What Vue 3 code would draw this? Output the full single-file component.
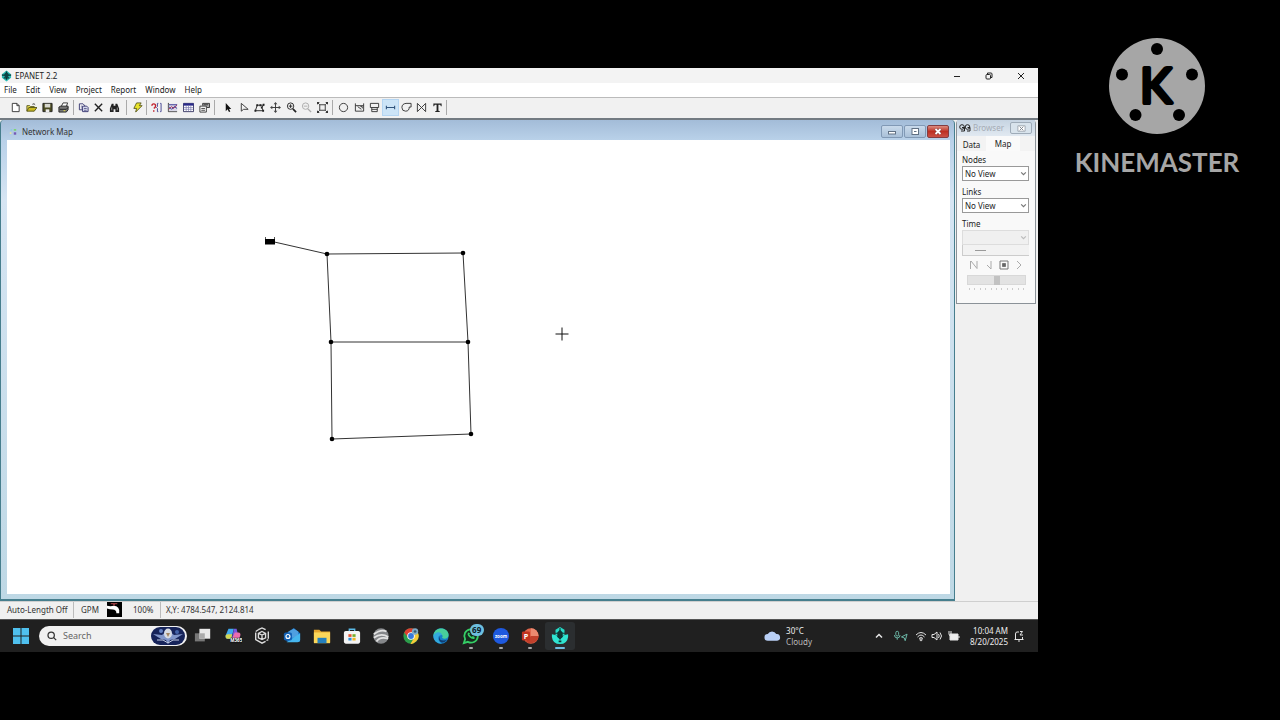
<script setup>
import { ref } from 'vue'

const menus = ['File', 'Edit', 'View', 'Project', 'Report', 'Window', 'Help']

const k = 'fill="none" stroke="#333" stroke-width="1"'
const groups = [
  { id: 'file', tools: [
    { name: 'New', art: `<path d="M2.500 1.500h5l2.500 2.500v6.500h-7.500z" fill="#fff" stroke="#333"/><path d="M7.500 1.500v2.500h2.500" ${k}/>` },
    { name: 'Open', art: '<path d="M1 10V4h3l1 1h4v2" fill="#f2e65c" stroke="#55551a"/><path d="M1 10l2-4h9l-3 4z" fill="#c9b922" stroke="#55551a"/><path d="M7 2.500q2-1.500 3 .5" fill="none" stroke="#333"/>' },
    { name: 'Save', art: '<path d="M1 1.500h10v9H1z" fill="#4c4c22" stroke="#222"/><path d="M3 2h6v4H3z" fill="#d8d8cf"/><path d="M4 8h4v3H4z" fill="#eee"/>' },
    { name: 'Print', art: '<path d="M3.500 5l2-4h5l-1.500 4" fill="#fff" stroke="#333"/><path d="M1 5.500l2-1h8v4L9 11H1z" fill="#777" stroke="#222"/><path d="M2 8h7l2-2" fill="none" stroke="#222"/><path d="M6 9.500h2" stroke="#eee23c"/>' } ] },
  { id: 'edit', tools: [
    { name: 'Copy', art: '<path d="M1.500 2h4l1.500 1.500v5h-5.500z" fill="#fff" stroke="#33336e"/><path d="M5 4.500h4.500l1.500 1.500v4.500H5z" fill="#dfe2f4" stroke="#33336e"/><path d="M6.500 7h3M6.500 9h3M3 4.500h1.500M3 6.500h1.500" stroke="#33336e" stroke-width=".8"/>' },
    { name: 'Delete', art: '<path d="M2 2l8 8M10 2l-8 8" fill="none" stroke="#222" stroke-width="1.500"/>' },
    { name: 'Find', art: '<path d="M3 2h2v2h2V2h2l2 5v4H7V8H5v3H1V7z" fill="#222"/><path d="M3 6v3M9 6v3" stroke="#bbb" stroke-width=".8"/>' } ] },
  { id: 'run', tools: [
    { name: 'Run', art: '<path d="M5 1h5L8 4h3L4 11l1-4H2z" fill="#e9e42c" stroke="#4b4b12" stroke-width=".9"/>' } ] },
  { id: 'report', tools: [
    { name: 'Query', art: '<path d="M1 4q0-2 2-2t2 2-2 3M3 9v1.500" fill="none" stroke="#c11f2a" stroke-width="1.500"/><path d="M8 1.500H7V5L6 6l1 1v3.500h1M10 1.500h1v9h-1" fill="none" stroke="#40408f"/>' },
    { name: 'Graph', art: '<path d="M1.500 1v9.500H11" fill="none" stroke="#333"/><path d="M2 2h9v8H2z" fill="#d8d8e8"/><path d="M2 8l3-3 2 2 4-4" fill="none" stroke="#b02040"/><path d="M2 5l3 3 3-3 3 2M2 3h9" fill="none" stroke="#333391"/>' },
    { name: 'Table', art: '<path d="M.500 1.500h11v9H.500z" fill="#fff" stroke="#333360"/><path d="M.500 1.500h11v2.500H.500z" fill="#29298a"/><path d="M3.500 4v6M6 4v6M8.500 4v6M1 6h10M1 8h10" stroke="#7575ac" stroke-width=".7"/>' },
    { name: 'Options', art: '<path d="M4 4V1.500h7.500V6H8.500" fill="#aaa" stroke="#333"/><path d="M1 4.500h7v6.500H1z" fill="#fff" stroke="#333"/><path d="M5 3h5M2.500 7h4M2.500 9h4" stroke="#333"/>' } ] },
  { id: 'map', tools: [
    { name: 'Select Object', art: '<path d="M3 1v9l2-2 1.500 3 1.500-.700L6.600 7.500H9z" fill="#111"/>' },
    { name: 'Select Vertex', art: `<path d="M2.500 1.500v8.500l2.500-2h5z" ${k}/>` },
    { name: 'Select Region', art: '<path d="M3.500 3.500h7L8.500 6l1.500 3.500H1.500z" fill="none" stroke="#222"/><path d="M2.500 2.500h2v2h-2zM9.500 2h2v2h-2zM7.500 5h2v2h-2zM9 8.500h2v2H9zM.500 8.500h2v2h-2zM6 2.500h2v2H6z" fill="#222"/>' },
    { name: 'Pan', art: '<path d="M6 1.500v9M1.500 6h9" stroke="#333"/><path d="M6 0l2 2.500H4zM6 12l2-2.500H4zM0 6l2.500-2v4zM12 6L9.500 4v4z" fill="#444"/>' },
    { name: 'Zoom In', art: `<circle cx="5" cy="4.500" r="3.500" fill="none" stroke="#222"/><path d="M3 4.500h4M5 2.500v4" stroke="#222"/><path d="M7.500 7.500l3.500 3.500" stroke="#222" stroke-width="1.800"/>` },
    { name: 'Zoom Out', art: '<circle cx="5" cy="4.500" r="3.500" fill="none" stroke="#aaa"/><path d="M3 4.500h4" stroke="#aaa"/><path d="M7.500 7.500l3.500 3.500" stroke="#aaa" stroke-width="1.500"/>' },
    { name: 'Full Extent', art: `<path d="M3 3h6v6H3z" fill="none" stroke="#333"/><path d="M.500 .500L3 3M11.500 .500L9 3M.500 11.500L3 9M11.500 11.500L9 9" ${k}/><path d="M0 0h3L0 3zM12 0v3L9 0zM0 12V9l3 3zM12 12H9l3-3z" fill="#333"/>` } ] },
  { id: 'draw', tools: [
    { name: 'Junction', art: `<circle cx="6" cy="6" r="4.500" ${k}/>` },
    { name: 'Reservoir', art: `<path d="M1.500 1.500v8.500h9V1.500M1.500 4h9" ${k}/><path d="M4 5l4 3M7 5h2v2" ${k}/>` },
    { name: 'Tank', art: `<path d="M1.500 1.500h9V6h-9zM3 6v4.500h6V6M3 8h6" ${k}/>` },
    { name: 'Pipe', on: true, art: '<path d="M1.500 4v4M10.500 4v4M2 6h8" fill="none" stroke="#31547d" stroke-width="1.200"/>' },
    { name: 'Pump', art: `<path d="M11 1.500H5.500Q1 2 1 6t4 4 4-4.500h2z" ${k}/>` },
    { name: 'Valve', art: `<path d="M1.500 1.500v9l9-9v9z" ${k}/>` },
    { name: 'Label', art: '<path d="M1.500 1.500h9v3H9.700L9 3H7v6.500l1.500.500v1h-5v-1l1.500-.500V3H3l-.700 1.500h-.800z" fill="#222"/>' } ] },
]

const nodes = [
  { x: 320, y: 114 }, { x: 456, y: 113 }, { x: 324, y: 202 },
  { x: 461, y: 202 }, { x: 325, y: 299 }, { x: 464, y: 294 },
]
const pipes = [[0, 1], [0, 2], [1, 3], [2, 3], [2, 4], [3, 5], [4, 5]]
const reservoir = { x: 263, y: 101 }

const nodeView = ref('No View')
const linkView = ref('No View')

const apps = [
  { name: 'Task View', art: '<path d="M1 7h11v9H1z" fill="#777"/><path d="M6 2h12v11H6z" fill="#e8e8e8"/><path d="M6 7h6v6H6z" fill="#aaa"/>' },
  { name: 'Microsoft 365 Copilot', art: '<path d="M5 2h6L8 13H4Q1 13 2 9z" fill="#3fa9ee"/><path d="M4 8h5L8 13H4Q1 13 2 9z" fill="#d4d653"/><path d="M11 2h3l1 4-3 7-3-1z" fill="#7657e0"/><path d="M12 6h4q3 0 2 4l-2 5H8z" fill="#eb6cae"/><path d="M7 12h13v6H7z" fill="#181818"/><text x="7" y="17" font-size="5" font-weight="700" fill="#fff">M365</text>' },
  { name: 'Copilot Studio', art: '<path d="M6 3l4-2 4 2M17 5v8M14 16l-4 2-7-4V6M6 3L3 5M17 14l-2 1" fill="none" stroke="#ddd" stroke-width="1.500"/><path d="M10 5l4 2v5l-4 2-4-2V7zM6 7l4 2 4-2M10 9v5" fill="none" stroke="#ddd" stroke-width="1.500"/>' },
  { name: 'Outlook', art: '<path d="M4 7l8-6 7 6v9H4z" fill="#1673c5"/><path d="M6 5l6-3 5 3v7H6z" fill="#4f9fe0"/><path d="M4 17L19 7v7q0 3-3 3z" fill="#46b6ee"/><rect x="1" y="6" width="9" height="9" rx="2" fill="#1261b5"/><circle cx="5.500" cy="10.500" r="2.200" fill="none" stroke="#fff" stroke-width="1.300"/>' },
  { name: 'File Explorer', art: '<path d="M1 3h6l2 2h10v12H1z" fill="#e4a62e"/><path d="M1 6h18v12H1z" fill="#fbd75a"/><path d="M5 12h10v6H5z" fill="#2580bd"/>' },
  { name: 'Microsoft Store', art: '<path d="M7 5V2.500h6V5" fill="none" stroke="#5bbbe8" stroke-width="1.500"/><rect x="1" y="4.500" width="18" height="14" rx="2" fill="#f4f4f4"/><path d="M6 8h3.500v3H6z" fill="#e7532f"/><path d="M10.500 8H14v3h-3.500z" fill="#75af2b"/><path d="M6 12h3.500v3H6z" fill="#2b91dc"/><path d="M10.500 12H14v3h-3.500z" fill="#f2b526"/>' },
  { name: 'Earth', art: '<circle cx="10" cy="10" r="8.500" fill="#85878a"/><path d="M2 8q8-6 14-3M2 12q8-6 16-1M5 16q4-6 13-3" fill="none" stroke="#e2e2e2" stroke-width="2"/>' },
  { name: 'Chrome', art: '<circle cx="10" cy="10" r="8.500" fill="#2c9d4b"/><path d="M2.500 6a8.500 8.500 0 0 1 15 0h-7.500L7 12z" fill="#df3e32"/><path d="M10 6h7.500q3 6-2 10t-6 2.500l4-6.500z" fill="#f7ca38"/><circle cx="10" cy="10" r="4.200" fill="#fff"/><circle cx="10" cy="10" r="3.200" fill="#3679dc"/><circle cx="14.500" cy="5" r="3.500" fill="#7daac7"/><circle cx="14.500" cy="5" r="1.500" fill="#315977"/>' },
  { name: 'Edge', art: '<circle cx="10" cy="10" r="8.500" fill="#1680cb"/><path d="M1.500 10C2-1 18-1 18.500 9c0 4-5 5-7.500 3 3-3-3-7-9.500-2z" fill="#48cf9b"/><path d="M1.500 10c2-6 9.500-5 9.500-1-6 0-5 7 0 9.500-5 0-9.500-3-9.500-8.500z" fill="#33a9dc"/><path d="M9 10q-2 5 4 5 2 0 4-1-3 4-7 3-4-3-1-7z" fill="#113c70"/>' },
  { name: 'WhatsApp', open: true, badge: 69, art: '<path d="M2 18l1.500-4.500a7.500 7.500 0 1 1 3 3z" fill="#152b1d" stroke="#35cf66" stroke-width="2"/><path d="M7 6q-2 2 1 5t6 2v-2l-2-1-1 1q-2-1-3-3l1-1z" fill="#35cf66"/>' },
  { name: 'Zoom', open: true, art: '<circle cx="10" cy="10" r="9" fill="#1e59df"/><text x="10" y="12" font-size="5" font-weight="700" text-anchor="middle" fill="#fff">zoom</text>' },
  { name: 'PowerPoint', open: true, art: '<circle cx="11" cy="10" r="8.500" fill="#e0644a"/><path d="M11 1.500a8.500 8.500 0 0 1 8.500 8.500H11z" fill="#ec8a70"/><path d="M11 10h8.500a8.500 8.500 0 0 1-14 6z" fill="#c2412c"/><rect x="1" y="5" width="9" height="10" rx="1.500" fill="#c2331f"/><text x="5.500" y="13" font-size="8" font-weight="700" text-anchor="middle" fill="#fff">P</text>' },
  { name: 'EPANET', open: true, active: true, art: '<path d="M10 0l5 3v6l-5 3-5-3V3z" fill="#25dbc7"/><path d="M1 8l4 1 5 4 5-4 4-1v3q-1 8-9 8T1 11z" fill="#2fe5d2"/><path d="M10 3l3 3v5l-3 3-3-3V6zM8.500 15h3v2h-3z" fill="#0d3533"/><path d="M4 7h12M10 1v13" stroke="#123d3a" stroke-width="1.200"/>' },
]
</script>

<template>
  <div class="screen">
    <main class="desktop">
      <header class="titlebar">
        <svg class="app-icon" viewBox="0 0 12 12"><path d="M6 0l5 4v4l-5 4-5-4V4z" fill="#29bdb5" /><path d="M6 1v9M1 5h10M3 8h6" stroke="#0b3436" stroke-width="1.500" /><circle cx="6" cy="5" r="2.500" fill="#0b4447" /></svg>
        <h1>EPANET 2.2</h1>
        <div class="win-controls">
          <button aria-label="Minimize"><svg viewBox="0 0 10 10"><path d="M2 5.500h6" /></svg></button>
          <button aria-label="Restore"><svg viewBox="0 0 10 10"><rect x="2" y="3.500" width="4.500" height="4.500" rx="1" /><path d="M3.500 3.500V2h3.500q1 0 1 1v3.500H6.500" /></svg></button>
          <button aria-label="Close"><svg viewBox="0 0 10 10"><path d="M2 2l6 6M8 2L2 8" /></svg></button>
        </div>
      </header>

      <nav class="menubar">
        <button v-for="m in menus" :key="m">{{ m }}</button>
      </nav>

      <div class="toolbar" role="toolbar" aria-label="Tools">
        <div v-for="g in groups" :key="g.id" class="group" :class="g.id">
          <button v-for="t in g.tools" :key="t.name" :class="{ on: t.on }" :aria-label="t.name">
            <svg viewBox="0 0 12 12" v-html="t.art"></svg>
          </button>
        </div>
      </div>

      <div class="workspace">
        <section class="map-window">
          <header class="map-title">
            <svg class="map-icon" viewBox="0 0 10 10"><path d="M2 2h2v2H2z" fill="#86cce0" /><path d="M6 2h3v2H6z" fill="#78d867" /><path d="M1 6h2v2H1z" fill="#ece89c" /><path d="M6 6h3v3H6z" fill="#7559b5" /></svg>
            <h2>Network Map</h2>
            <div class="map-controls">
              <button aria-label="Minimize map"><svg viewBox="0 0 20 11"><rect x="6.500" y="5.500" width="7" height="2.500" fill="#fff" stroke="#607083" /></svg></button>
              <button aria-label="Maximize map"><svg viewBox="0 0 20 11"><rect x="7" y="2.500" width="6.500" height="6" fill="#fff" stroke="#607083" /><path d="M9 5.500h2.500" stroke="#607083" /></svg></button>
              <button class="close" aria-label="Close map"><svg viewBox="0 0 20 11"><path d="M7.500 3l5 5M12.500 3l-5 5" stroke="#733" stroke-width="3" /><path d="M7.500 3l5 5M12.500 3l-5 5" stroke="#fff" stroke-width="1.800" /></svg></button>
            </div>
          </header>
          <svg class="canvas">
            <line v-for="([a, b], i) in pipes" :key="i" :x1="nodes[a].x" :y1="nodes[a].y" :x2="nodes[b].x" :y2="nodes[b].y" class="pipe" />
            <line :x1="reservoir.x" :y1="reservoir.y" :x2="nodes[0].x" :y2="nodes[0].y" class="pipe" />
            <circle v-for="(n, i) in nodes" :key="'n' + i" :cx="n.x" :cy="n.y" r="2.300" />
            <path d="M258.500 97v7M267.500 97v7" fill="none" stroke="#555" /><path d="M258 99h10v5.500h-10z" />
            <path class="cursor" d="M555 187.500v13M548.500 194h13" />
          </svg>
        </section>

        <aside class="browser">
          <header>
            <svg viewBox="0 0 12 10"><circle cx="3" cy="4" r="2.300" /><circle cx="8.500" cy="4" r="2.300" /><path d="M3 4.500h2.500v3.500H2M8.500 4.500H11v3.500H8" /></svg>
            <h2>Browser</h2>
            <button aria-label="Close browser"><svg viewBox="0 0 10 10"><path class="frame" d="M1 2h8v6H1z" /><path d="M3 3l4 4M7 3L3 7" /></svg></button>
          </header>
          <div class="tabs" role="tablist">
            <button role="tab" aria-selected="false">Data</button>
            <button role="tab" aria-selected="true" class="active">Map</button>
          </div>
          <div class="panel">
            <label for="nodes">Nodes</label>
            <div class="pick"><select id="nodes" v-model="nodeView"><option>No View</option></select><svg viewBox="0 0 6 6"><path d="M1 2l2 2 2-2" /></svg></div>
            <label for="links">Links</label>
            <div class="pick"><select id="links" v-model="linkView"><option>No View</option></select><svg viewBox="0 0 6 6"><path d="M1 2l2 2 2-2" /></svg></div>
            <label for="time">Time</label>
            <div class="pick off"><select id="time" disabled><option></option></select><svg viewBox="0 0 6 6"><path d="M1 2l2 2 2-2" /></svg></div>
            <div class="scroll"><i></i></div>
            <div class="player">
              <button disabled aria-label="Reset"><svg viewBox="0 0 10 10"><path d="M1.500 1v8M2 1l6 7.500V1" /></svg></button>
              <button disabled aria-label="Back"><svg viewBox="0 0 10 10"><path d="M3 5l4 4V1" /></svg></button>
              <button disabled aria-label="Stop"><svg viewBox="0 0 10 10"><path d="M1 1h8v8H1z" /><path d="M3.500 3.500h3v3h-3z" class="solid" /></svg></button>
              <button disabled aria-label="Forward"><svg viewBox="0 0 10 10"><path d="M3 1l4 4-4 4" /></svg></button>
            </div>
            <input type="range" disabled aria-label="Animation speed" />
            <div class="ticks"><i v-for="n in 11" :key="n"></i></div>
          </div>
        </aside>
      </div>

      <footer class="status">
        <span class="auto">Auto-Length Off</span>
        <span class="units">GPM</span>
        <span class="tap"><svg viewBox="0 0 16 16"><path d="M0 0h16v16H0z" /><path d="M0 4q4 1 7 0 7 0 6 8h-3q0-4-4-4-3 0-6-1z" fill="#fff" /><path d="M4 1h7v1.500H8.500V4H6.500V2.500H4z" fill="#8f3a3e" /></svg></span>
        <span class="zoom">100%</span>
        <span class="coords">X,Y: 4784.547, 2124.814</span>
      </footer>

      <footer class="taskbar">
        <button class="start" aria-label="Start"><svg viewBox="0 0 16 16"><path d="M0 0h7.500v7.500H0zM8.500 0H16v7.500H8.500zM0 8.500h7.500V16H0zM8.500 8.500H16V16H8.500z" fill="#4fc0ee" /></svg></button>
        <div class="search">
          <svg class="lens" viewBox="0 0 12 12"><circle cx="5" cy="5" r="3.800" /><path d="M8 8l3 3" /></svg>
          <input type="text" placeholder="Search" aria-label="Search" />
          <svg class="art" viewBox="0 0 34 18"><rect width="34" height="18" rx="9" fill="#17245a" /><circle cx="10" cy="4" r="2" fill="#6482c4" /><circle cx="26" cy="5" r="2" fill="#4564a8" /><path d="M2 7l9 1 6-5 6 5 9-1-8 5-5 1-2 4-2-4-5-1z" fill="#8196c9" /><ellipse cx="17" cy="6.500" rx="4" ry="5" fill="#d8dce3" /><path d="M15 6h4l-2 4z" fill="#a48662" /><path d="M6 13h6l5 3 5-3h6" fill="none" stroke="#c7d0e6" /></svg>
        </div>
        <div class="apps">
          <button v-for="a in apps" :key="a.name" :aria-label="a.name" :class="{ open: a.open, active: a.active }">
            <svg viewBox="0 0 20 20" v-html="a.art"></svg>
            <span v-if="a.badge" class="badge">{{ a.badge }}</span>
          </button>
        </div>
        <div class="weather">
          <svg viewBox="0 0 18 12"><path d="M4 11a3.500 3.500 0 0 1 0-7 5 5 0 0 1 9 0 3.500 3.500 0 0 1 1 7z" fill="#b9cff5" /></svg>
          <p>30°C<br /><span>Cloudy</span></p>
        </div>
        <div class="tray">
          <svg class="chev" viewBox="0 0 10 10"><path d="M2 6.500l3-3 3 3" /></svg>
          <svg class="mic" viewBox="0 0 16 12"><path d="M3 2.500a1.500 1.500 0 0 1 3 0v2a1.500 1.500 0 0 1-3 0zM1.500 5q0 3 3 3t3-3M4.500 8v2" /><path d="M15 4l-6 3 3 1 1 3z" /></svg>
          <svg class="net" viewBox="0 0 12 12"><path d="M1 5q5-5 10 0M2.500 7q3.500-4 7 0M4 8.500q2-2 4 0" /><circle cx="6" cy="9.800" r="1" /></svg>
          <svg class="net" viewBox="0 0 12 12"><path d="M1 4.500h2l3-2.500v8L3 7.500H1zM7.500 4q1.500 2 0 4M9 2.500q3 3.500 0 7" /></svg>
          <svg class="battery" viewBox="0 0 12 12"><path d="M2 4h8v6H2z" fill="#eee" /><path d="M11 6v2" /><path d="M1 1v3q0 2 2 2M3 1v3" /></svg>
          <p class="clock">10:04 AM<br />8/20/2025</p>
          <svg class="bell" viewBox="0 0 12 12"><path d="M6 2H4Q2.500 2 2.500 4v5M1.500 9.500h9M9.500 9V7M5 11h2M7 1.500h2.500L7 5h3" /></svg>
        </div>
      </footer>
    </main>

    <aside class="brand">
      <svg viewBox="0 0 96 96" aria-label="KineMaster logo">
        <circle cx="48" cy="48" r="48" fill="#a6a6a6" />
        <circle cx="48" cy="11" r="6" /><circle cx="13" cy="36.500" r="6" /><circle cx="83" cy="36.500" r="6" /><circle cx="26.500" cy="77" r="6" /><circle cx="70" cy="77" r="6" />
        <text x="31" y="65" class="k">K</text>
      </svg>
      <strong>KINEMASTER</strong>
    </aside>
  </div>
</template>

<style>
body { background: #000; }
</style>

<style scoped>
* { box-sizing: border-box; }
.screen { display: flex; min-height: 100vh; background: #000; font: 8px/10px "Noto Sans", "Open Sans", sans-serif; color: #222; padding-bottom: 68px; }
button, input, select { font: inherit; color: inherit; border: 0; background: none; padding: 0; margin: 0; }
h1, h2, p { margin: 0; font: inherit; }
svg { display: block; }

.desktop { flex: 1; min-width: 0; margin-top: 68px; display: flex; flex-direction: column; background: #f0f0f0; }
.titlebar { height: 15px; display: flex; align-items: center; gap: 3px; padding-left: 1px; background: #f3f3f3; }
.app-icon { width: 11px; height: 12px; }
.win-controls { margin-left: auto; display: flex; padding-right: 1px; }
.win-controls button { width: 32px; display: grid; place-items: center; }
.win-controls svg { width: 10px; height: 10px; fill: none; stroke: #222; }
.menubar { height: 14px; display: flex; gap: 9px; padding-left: 4px; background: #fff; align-items: center; }

.toolbar { height: 21px; display: flex; align-items: center; padding: 0 0 2px 8px; border-top: 1px solid #bbb; background: #f1f1f1; }
.group { display: flex; height: 15px; border-right: 1px solid #aaa; }
.group button { flex: 1; display: grid; place-items: center; }
.group svg { width: 11px; height: 11px; }
.group .on { background: #cce4f7; outline: 1px solid #b4d5f2; }
.file { width: 66px; padding-right: 2px; }
.edit { width: 53px; padding: 0 4px 0 2px; }
.run { width: 20px; padding: 0 1px 0 3px; }
.report { width: 68px; padding: 0 2px 0 2px; }
.map { width: 118px; padding: 0 2px 0 6px; }
.draw { width: 114px; padding: 0 1px 0 3px; }

.workspace { flex: 1; display: flex; align-items: flex-start; gap: 1px; padding: 0 2px 0 0; border-top: 2px solid #737b82; }
.map-window { flex: 1; align-self: stretch; display: flex; flex-direction: column; padding: 0 4px 5px 6px; border: 1px solid #467e8d; border-width: 0 1px 2px 1px; border-radius: 4px 4px 0 0; background: linear-gradient(#a3bcd8, #b9d1e9 20px, #d6e5f3 80px, #bed8e5); }
.map-title { height: 20px; display: flex; align-items: center; gap: 5px; padding: 3px 0 0 2px; color: #333; }
.map-icon { width: 8px; height: 9px; }
.map-controls { margin-left: auto; display: flex; gap: 1px; padding-right: 1px; }
.map-controls button { width: 22px; height: 13px; border: 1px solid #8199b5; border-radius: 2px; background: linear-gradient(#c9daeb, #a9c0d8); }
.map-controls svg { width: 20px; height: 11px; }
.map-controls .close { border-color: #843d41; background: linear-gradient(#dc8c80, #bd3023 50%, #ca5146); }
.canvas { flex: 1; width: 100%; min-height: 0; background: #fff; }
.pipe { stroke: #333; stroke-width: 1; }
.cursor { stroke: #111; stroke-width: 1; fill: none; }

.browser { width: 80px; height: 184px; border: 1px solid #8b9298; border-top: 0; border-radius: 4px 4px 0 0; background: #f3f3f3; }
.browser header { height: 16px; display: flex; align-items: center; gap: 2px; padding: 0 3px 0 2px; background: linear-gradient(#c6d4e2, #e1e9f1); color: #a5acb5; }
.browser header > svg { width: 12px; height: 10px; fill: none; stroke: #222; }
.browser header button { margin-left: auto; width: 22px; height: 12px; display: grid; place-items: center; border: 1px solid #9eabb8; border-radius: 2px; background: #d8e3ec; }
.browser header button svg { width: 9px; height: 9px; fill: none; stroke: #77808a; stroke-width: 1; }
.browser header .frame { fill: #fff; stroke: #9aa4ae; }
.tabs { display: flex; height: 15px; }
.tabs button { width: 29px; padding-top: 2px; }
.tabs .active { width: 34px; padding-top: 0; background: #fafafa; }
.panel { display: flex; flex-direction: column; padding: 4px 6px 0 5px; background: #f9f9f9; height: 152px; }
.panel label { height: 11px; }
.pick { position: relative; height: 15px; margin-bottom: 6px; border: 1px solid #999; background: #fff; }
.pick select { display: block; appearance: none; width: 100%; height: 13px; padding-left: 2px; line-height: 13px; }
.pick svg { position: absolute; right: 1px; top: 3px; width: 7px; height: 7px; fill: none; stroke: #777; pointer-events: none; }
.pick.off { margin-bottom: 0; border-color: #ddd; background: #f0f0f0; }
.pick.off svg { stroke: #bbb; }
.scroll { height: 11px; border: 1px solid #ccc; border-width: 0 0 1px 1px; background: #f2f2f2; display: flex; align-items: center; }
.scroll i { width: 11px; height: 1px; margin-left: 12px; background: #999; }
.player { display: flex; gap: 5px; padding: 4px 0 5px 7px; }
.player button { width: 10px; height: 10px; }
.player svg { width: 10px; height: 10px; fill: none; stroke: #aaa; }
.player button:nth-child(3) svg { stroke: #777; }
.player .solid { fill: #666; }
input[type="range"] { appearance: none; height: 10px; margin: 0 3px 3px 5px; background: #e3e3e3; border: 1px solid #d8d8d8; }
input[type="range"]::-webkit-slider-thumb { appearance: none; width: 6px; height: 9px; background: #c2c2c2; }
.ticks { display: flex; justify-content: space-between; padding: 0 5px 0 7px; }
.ticks i { width: 1px; height: 2px; background: #ccc; }

.status { height: 18px; display: flex; align-items: flex-start; border-top: 1px solid #cfcfcf; padding-left: 7px; color: #333; }
.status span { height: 16px; line-height: 16px; white-space: nowrap; }
.auto { width: 67px; border-right: 1px solid #bbb; }
.units { width: 33px; padding-left: 7px; }
.tap svg { width: 15px; height: 15px; }
.zoom { width: 39px; padding-left: 11px; margin-right: 5px; border-right: 1px solid #bbb; }

.taskbar { height: 33px; display: flex; align-items: center; background: #202020; color: #eee; padding-right: 13px; border-top: 1px solid #555; }
.start { margin: 0 10px 0 13px; }
.start svg { width: 16px; height: 16px; }
.search { width: 148px; height: 20px; display: flex; align-items: center; border-radius: 10px; background: #f1f1f1; padding: 0 2px 0 8px; color: #555; }
.lens { width: 10px; height: 10px; fill: none; stroke: #333; stroke-width: 1.500; flex: none; }
.search input { flex: 1; min-width: 0; font-size: 9px; padding-left: 6px; outline: 0; }
.search input::placeholder { color: #666; opacity: 1; }
.art { width: 34px; height: 18px; }
.apps { width: 387px; display: flex; margin-left: 1px; }
.apps button { flex: 1; height: 28px; display: grid; place-items: center; position: relative; border-radius: 3px; }
.apps svg { width: 18px; height: 18px; }
.apps .active { background: #2b2e30; }
.apps .open::after { content: ""; position: absolute; bottom: 1px; left: 50%; width: 4px; height: 2px; margin-left: -2px; border-radius: 1px; background: #aaa; }
.apps .active::after { width: 10px; margin-left: -5px; background: #70bfe3; }
.badge { position: absolute; top: 2px; right: 2px; width: 14px; height: 12px; border-radius: 6px; background: #6dbfdf; color: #0c1a24; font-weight: 700; line-height: 12px; }
.weather { margin-left: auto; display: flex; align-items: center; gap: 5px; line-height: 11px; }
.weather svg { width: 17px; height: 12px; }
.weather span { color: #bbb; }
.tray { display: flex; align-items: center; margin-left: 62px; }
.tray svg { fill: none; stroke: #e6e6e6; stroke-width: 1; flex: none; }
.tray .chev { width: 10px; height: 10px; stroke-width: 1.500; }
.tray .mic { width: 15px; height: 12px; margin: 0 7px 0 9px; stroke: #6fbfae; }
.net { width: 12px; height: 12px; margin-right: 4px; }
.battery { width: 12px; height: 12px; margin-left: 1px; }
.clock { width: 48px; text-align: right; line-height: 11px; white-space: nowrap; }
.bell { width: 12px; height: 12px; margin-left: 5px; }

.brand { width: 242px; flex: none; padding: 38px 4px 0 0; display: flex; flex-direction: column; align-items: center; color: #a6a6a6; }
.brand svg { width: 96px; height: 96px; }
.k { font: 400 48px Lato, sans-serif; fill: #000; stroke: #000; stroke-width: 4; stroke-linejoin: round; }
.brand strong { margin-top: 13px; font: 700 26px/30px Lato, sans-serif; }
</style>
